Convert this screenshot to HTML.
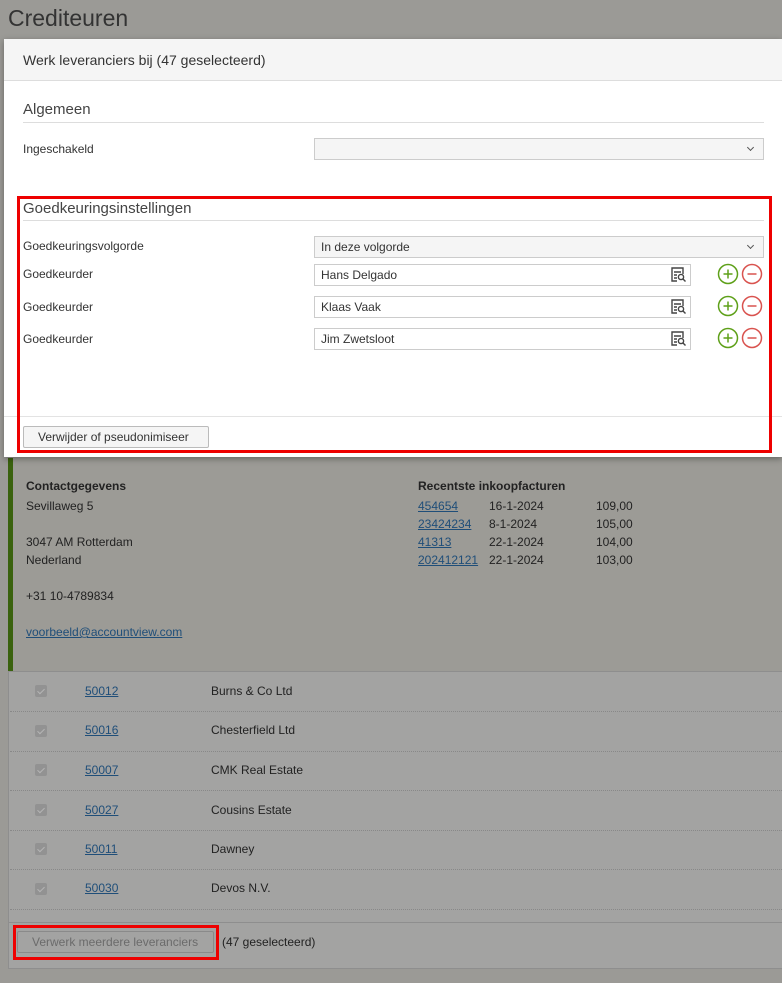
<!DOCTYPE html>
<html><head><meta charset="utf-8"><style>
*{box-sizing:border-box;margin:0;padding:0}
body{width:782px;height:983px;overflow:hidden;background:#9b9a96;font-family:"Liberation Sans",sans-serif;font-size:12px;color:#222;position:relative}
.a{position:absolute}
.lnk{color:#1f4e79;text-decoration:underline}
.inp{position:absolute;left:314px;width:377px;height:22px;border:1px solid #ccc;background:#fff;padding:3px 6px;font-size:12px;color:#333}
.sel{position:absolute;left:314px;width:450px;height:22px;border:1px solid #ccc;background:#f5f5f5;padding:3px 6px;color:#333}
.chev{position:absolute;right:10px;top:6px;width:5px;height:5px;border-right:1.2px solid #555;border-bottom:1.2px solid #555;transform:rotate(45deg)}
.lbl{position:absolute;left:23px;font-size:12px;color:#333}
.row{position:absolute;left:10px;width:772px;height:40px;border-bottom:1px dotted #888}
.cb{position:absolute;left:25px;top:13px;width:12px;height:12px;background:#929292;border-radius:2px}
.cb:after{content:"";position:absolute;left:4px;top:1.5px;width:3px;height:6px;border-right:1.5px solid #b5b5b5;border-bottom:1.5px solid #b5b5b5;transform:rotate(45deg)}
</style></head><body>
<div class="a" style="left:8px;top:5px;font-size:23px;color:#333;font-weight:300">Crediteuren</div>

<div class="a" style="left:8px;top:458px;width:774px;height:213px;background:#9c9b96"></div>
<div class="a" style="left:8px;top:458px;width:5px;height:213px;background:#3a620e"></div>
<div class="a" style="left:26px;top:479px;font-weight:bold;font-size:12px">Contactgegevens</div>
<div class="a" style="left:26px;top:497px;line-height:18px">Sevillaweg 5<br><br>3047 AM Rotterdam<br>Nederland<br><br>+31 10-4789834<br><br><span class="lnk">voorbeeld@accountview.com</span></div>
<div class="a" style="left:418px;top:479px;font-weight:bold">Recentste inkoopfacturen</div>
<div class="a" style="left:418px;top:497px;line-height:18px"><span class="lnk">454654</span><br><span class="lnk">23424234</span><br><span class="lnk">41313</span><br><span class="lnk">202412121</span></div>
<div class="a" style="left:489px;top:497px;line-height:18px">16-1-2024<br>8-1-2024<br>22-1-2024<br>22-1-2024</div>
<div class="a" style="left:596px;top:497px;line-height:18px">109,00<br>105,00<br>104,00<br>103,00</div>

<div class="a" style="left:8px;top:671px;width:774px;height:298px;background:#a3a3a2;border-top:1px solid #8e8e8e;border-left:1px solid #8e8e8e"></div>
<div class="row" style="top:672px"><div class="cb"></div><span class="a lnk" style="left:75px;top:12px">50012</span><span class="a" style="left:201px;top:12px">Burns &amp; Co Ltd</span></div>
<div class="row" style="top:712px"><div class="cb"></div><span class="a lnk" style="left:75px;top:11px">50016</span><span class="a" style="left:201px;top:11px">Chesterfield Ltd</span></div>
<div class="row" style="top:751px"><div class="cb"></div><span class="a lnk" style="left:75px;top:12px">50007</span><span class="a" style="left:201px;top:12px">CMK Real Estate</span></div>
<div class="row" style="top:791px"><div class="cb"></div><span class="a lnk" style="left:75px;top:12px">50027</span><span class="a" style="left:201px;top:12px">Cousins Estate</span></div>
<div class="row" style="top:830px"><div class="cb"></div><span class="a lnk" style="left:75px;top:12px">50011</span><span class="a" style="left:201px;top:12px">Dawney</span></div>
<div class="row" style="top:870px"><div class="cb"></div><span class="a lnk" style="left:75px;top:11px">50030</span><span class="a" style="left:201px;top:11px">Devos N.V.</span></div>
<div class="a" style="left:8px;top:922px;width:774px;height:1px;background:#8e8e8e"></div>
<div class="a" style="left:13px;top:925px;width:206px;height:35px;border:3px solid #e00"></div>
<div class="a" style="left:17px;top:931px;width:197px;height:22px;border:1px solid #8a8a8a;border-radius:2px;color:#6b6b6b;padding:3px 0 0 14px">Verwerk meerdere leveranciers</div>
<div class="a" style="left:222px;top:935px">(47 geselecteerd)</div>
<div class="a" style="left:8px;top:968px;width:774px;height:1px;background:#8e8e8e"></div>

<div class="a" style="left:4px;top:39px;width:778px;height:418px;background:#fff;box-shadow:0 2px 6px rgba(0,0,0,.35)"></div>
<div class="a" style="left:4px;top:39px;width:778px;height:42px;background:#f5f5f5;border-bottom:1px solid #ddd"></div>
<div class="a" style="left:23px;top:52px;font-size:14px;color:#333">Werk leveranciers bij (47 geselecteerd)</div>
<div class="a" style="left:23px;top:101px;font-size:15px;color:#444">Algemeen</div>
<div class="a" style="left:23px;top:122px;width:741px;height:1px;background:#ddd"></div>
<div class="lbl" style="top:142px">Ingeschakeld</div>
<div class="sel" style="top:138px"><div class="chev"></div></div>

<div class="a" style="left:23px;top:200px;font-size:15px;color:#444">Goedkeuringsinstellingen</div>
<div class="a" style="left:23px;top:220px;width:741px;height:1px;background:#ddd"></div>
<div class="lbl" style="top:239px">Goedkeuringsvolgorde</div>
<div class="sel" style="top:236px">In deze volgorde<div class="chev"></div></div>

<div class="lbl" style="top:267px">Goedkeurder</div>
<div class="inp" style="top:264px">Hans Delgado</div>
<div class="lbl" style="top:300px">Goedkeurder</div>
<div class="inp" style="top:296px">Klaas Vaak</div>
<div class="lbl" style="top:332px">Goedkeurder</div>
<div class="inp" style="top:328px">Jim Zwetsloot</div>

<svg class="a" style="left:0;top:0" width="782" height="460">
<g fill="none" stroke="#444" stroke-width="1.4">
<g id="ic"><path d="M683 274v-6h-11v13h5"/><path d="M674 272h7M674 275h3M674 278h3"/><circle cx="681" cy="277" r="2.6" fill="#fff"/><path d="M683 279l2.5 2.5"/></g>
<use href="#ic" y="32"/><use href="#ic" y="64"/>
</g>
<g stroke-width="1.5" fill="none">
<g id="pm"><circle cx="728" cy="274" r="9.5" stroke="#5ea019"/><path d="M723.5 274h9M728 269.5v9" stroke="#5ea019"/><circle cx="752" cy="274" r="9.5" stroke="#d9534f"/><path d="M747.5 274h9" stroke="#d9534f"/></g>
<use href="#pm" y="32"/><use href="#pm" y="64"/>
</g>
</svg>

<div class="a" style="left:4px;top:416px;width:778px;height:1px;background:#e3e3e3"></div>
<div class="a" style="left:23px;top:426px;width:186px;height:22px;border:1px solid #bbb;border-radius:2px;background:#f5f5f5;padding:3px 0 0 14px;color:#333">Verwijder of pseudonimiseer</div>
<div class="a" style="left:17px;top:196px;width:755px;height:257px;border:3px solid #e00"></div>
</body></html>
